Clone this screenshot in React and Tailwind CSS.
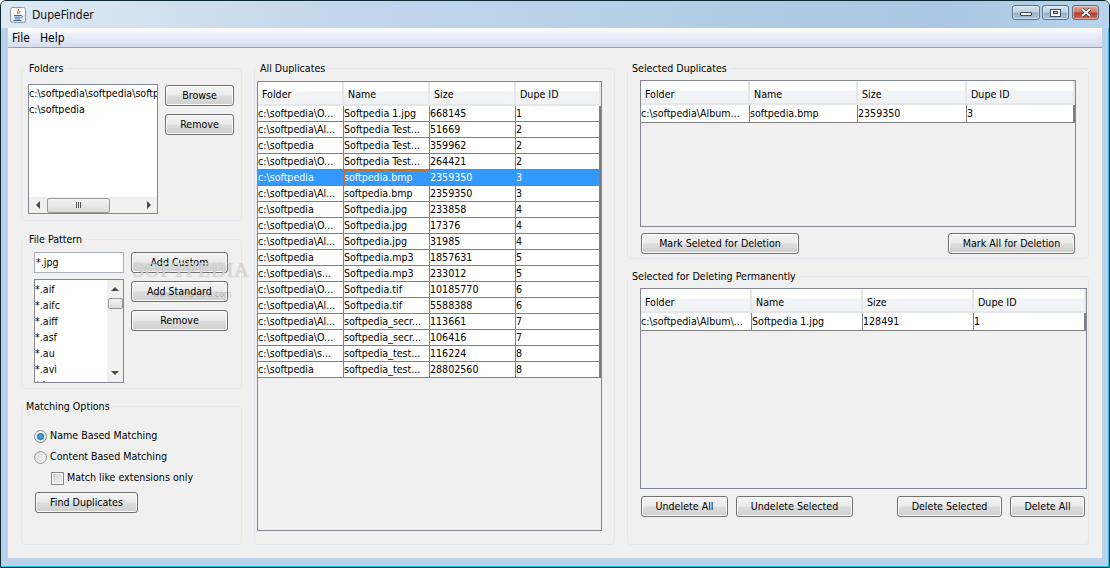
import React from 'react';

const ALL_ROWS = [
  ['c:\\softpedia\\O...', 'Softpedia 1.jpg', '668145', '1'],
  ['c:\\softpedia\\Al...', 'Softpedia Test...', '51669', '2'],
  ['c:\\softpedia', 'Softpedia Test...', '359962', '2'],
  ['c:\\softpedia\\O...', 'Softpedia Test...', '264421', '2'],
  ['c:\\softpedia', 'softpedia.bmp', '2359350', '3'],
  ['c:\\softpedia\\Al...', 'softpedia.bmp', '2359350', '3'],
  ['c:\\softpedia', 'Softpedia.jpg', '233858', '4'],
  ['c:\\softpedia\\O...', 'Softpedia.jpg', '17376', '4'],
  ['c:\\softpedia\\Al...', 'Softpedia.jpg', '31985', '4'],
  ['c:\\softpedia', 'Softpedia.mp3', '1857631', '5'],
  ['c:\\softpedia\\s...', 'Softpedia.mp3', '233012', '5'],
  ['c:\\softpedia\\O...', 'Softpedia.tif', '10185770', '6'],
  ['c:\\softpedia\\Al...', 'Softpedia.tif', '5588388', '6'],
  ['c:\\softpedia\\Al...', 'softpedia_secr...', '113661', '7'],
  ['c:\\softpedia\\O...', 'softpedia_secr...', '106416', '7'],
  ['c:\\softpedia\\s...', 'softpedia_test...', '116224', '8'],
  ['c:\\softpedia', 'softpedia_test...', '28802560', '8'],
];

const HEADERS = ['Folder', 'Name', 'Size', 'Dupe ID'];
const PATTERNS = ['*.aif', '*.aifc', '*.aiff', '*.asf', '*.au', '*.avi', '*.bmp'];

function Panel({ title, className, legendClass = 'left-[3px] px-[4px]', children }) {
  return (
    <div className={`relative rounded-[4px] border border-[#e3e8ee] ${className}`}>
      <span className={`absolute -top-[8px] bg-[#f0f0f0] leading-[14px] ${legendClass}`}>{title}</span>
      {children}
    </div>
  );
}

function Btn({ className = '', children }) {
  return (
    <button className={`flex h-[21px] items-center justify-center rounded-[3px] border border-[#707070] bg-[linear-gradient(#f3f3f3,#ebebeb_48%,#dddddd_52%,#cfcfcf)] pt-[1px] shadow-[inset_0_0_0_1px_#fbfbfb] ${className}`}>
      {children}
    </button>
  );
}

function Arrow({ dir }) {
  const points = { left: '5,0 1,4 5,8', right: '1,0 5,4 1,8', up: '0,5 4,1 8,5', down: '0,1 4,5 8,1' }[dir];
  const size = dir === 'left' || dir === 'right' ? 'h-[8px] w-[6px]' : 'h-[6px] w-[8px]';
  const box = dir === 'left' || dir === 'right' ? '0 0 6 8' : '0 0 8 6';
  return (
    <svg viewBox={box} className={size}>
      <polygon points={points} fill="#4a4a4a" />
    </svg>
  );
}

function DataTable({ columns, rows, className = '', rowHeight = 'h-[16px]', rowLeading = 'leading-[15px]', headerPad = 'pt-[3px]', selectedRow = -1 }) {
  return (
    <div className={`overflow-hidden border border-[#828790] bg-[#f0f0f0] ${className}`}>
      <div className="grid h-[24px]" style={{ gridTemplateColumns: columns }}>
        {HEADERS.map((h) => (
          <div key={h} className={`flex items-center border-r-2 border-b-2 border-[#e4e6e8] bg-[linear-gradient(#ffffff,#ffffff_40%,#f3f4f5_45%,#f1f2f3)] pl-[4px] ${headerPad}`}>
            {h}
          </div>
        ))}
      </div>
      {rows.map((row, i) => (
        <div key={i} className={`grid ${rowHeight}`} style={{ gridTemplateColumns: columns }}>
          {row.map((cell, j) => {
            const selected = i === selectedRow;
            const focused = selected && j === 1;
            return (
              <div
                key={j}
                className={`overflow-hidden whitespace-nowrap ${rowLeading} ${
                  j === 3 ? 'border-r-2' : 'border-r'
                } border-b border-[#808080] ${selected ? 'bg-[#3399ff] text-white' : 'bg-white'} ${
                  focused ? 'outline outline-1 -outline-offset-1 outline-[#c2702a]' : ''
                }`}
              >
                {cell}
              </div>
            );
          })}
        </div>
      ))}
    </div>
  );
}

function JavaIcon() {
  return (
    <svg viewBox="0 0 16 16" className="h-[16px] w-[16px]">
      <rect x="0.5" y="0.5" width="15" height="15" rx="2" fill="#e9eef5" stroke="#8d99a8" />
      <rect x="1.5" y="1.5" width="13" height="6" fill="#ffffff" />
      <path d="M8.5 2c1 1.5-2 2.5-1 4.5M10 4c0 1-1.5 1.500-1 2.500" stroke="#e0641c" strokeWidth="1.200" fill="none" />
      <path d="M4 8.500h7M4.500 10.200h6M5 12h5" stroke="#3f6fa8" strokeWidth="1" />
      <path d="M11 8.500c2 0 2 2-.5 2.500M3.500 13.500h8" stroke="#3f6fa8" strokeWidth="1" fill="none" />
    </svg>
  );
}

function WindowButtons() {
  const base = 'flex h-[15px] items-center justify-center rounded-[3px] border border-[#5d7186] shadow-[inset_0_0_0_1px_rgba(255,255,255,0.45)]';
  const blue = 'bg-[linear-gradient(#d3e2f0,#bcd0e4_48%,#94b0cc_52%,#a9c4dc)]';
  return (
    <div className="mr-[10px] mt-[-4px] flex gap-[2px]">
      <div className={`${base} ${blue} w-[28px] pt-[3px]`}>
        <div className="h-[4px] w-[12px] rounded-[1px] border border-[#3f4d5c] bg-white" />
      </div>
      <div className={`${base} ${blue} mr-[1px] w-[27px]`}>
        <div className="flex h-[8px] w-[11px] items-center justify-center border border-[#3f4d5c] bg-white">
          <div className="h-[3px] w-[5px] border border-[#3f4d5c] bg-[#a9c4dc]" />
        </div>
      </div>
      <div className={`${base} w-[27px] border-[#5a2a2a] bg-[linear-gradient(#e0a397,#cf7a6c_48%,#b8382a_52%,#cf6a5a)]`}>
        <svg viewBox="0 0 12 9" className="h-[9px] w-[12px]">
          <path d="M2 1l8 7M10 1l-8 7" stroke="#3d2a2a" strokeWidth="3.400" />
          <path d="M2 1l8 7M10 1l-8 7" stroke="#ffffff" strokeWidth="2" />
        </svg>
      </div>
    </div>
  );
}

function FoldersPanel() {
  return (
    <Panel title="Folders" className="h-[153px]">
      <div className="flex items-start pl-[6px] pt-[15px]">
        <div className="flex h-[130px] w-[130px] flex-col border border-[#828790] bg-white">
          <div className="flex-1 overflow-hidden pt-[1px]">
            <div className="h-[16px] whitespace-nowrap">c:\softpedia\softpedia\softpedia</div>
            <div className="h-[16px] whitespace-nowrap">c:\softpedia</div>
          </div>
          <div className="flex h-[16px] items-center bg-[#f0f0f0]">
            <div className="flex w-[18px] justify-center"><Arrow dir="left" /></div>
            <div className="flex h-[15px] w-[63px] items-center justify-center gap-[1px] rounded-[2px] border border-[#9a9a9a] bg-[linear-gradient(#f3f3f3,#dcdcdc)]">
              <div className="h-[6px] w-[1px] bg-[#555]" />
              <div className="h-[6px] w-[1px] bg-[#555]" />
              <div className="h-[6px] w-[1px] bg-[#555]" />
            </div>
            <div className="flex flex-1 justify-end pr-[5px]"><Arrow dir="right" /></div>
          </div>
        </div>
        <div className="ml-[7px] mt-[1px] flex flex-col gap-[8px]">
          <Btn className="w-[69px]">Browse</Btn>
          <Btn className="w-[69px]">Remove</Btn>
        </div>
      </div>
    </Panel>
  );
}

function FilePatternPanel() {
  return (
    <Panel title="File Pattern" className="mt-[18px] h-[150px]">
      <div className="flex items-start pl-[12px] pt-[12px]">
        <div className="w-[90px]">
          <div className="flex h-[21px] items-center border border-[#aab0b8] bg-white pl-[1px] pt-[1px]">*.jpg</div>
          <div className="mt-[6px] flex h-[104px] overflow-hidden border border-[#828790] bg-white">
            <div className="flex-1 overflow-hidden pt-[1px]">
              {PATTERNS.map((p) => (
                <div key={p} className="h-[16px] leading-[16px]">{p}</div>
              ))}
            </div>
            <div className="flex w-[16px] flex-col items-center bg-[#f0f0f0]">
              <div className="flex h-[18px] items-center"><Arrow dir="up" /></div>
              <div className="h-[11px] w-[15px] rounded-[2px] border border-[#9a9a9a] bg-[linear-gradient(#f3f3f3,#dcdcdc)]" />
              <div className="flex flex-1 items-end pb-[6px]"><Arrow dir="down" /></div>
            </div>
          </div>
        </div>
        <div className="ml-[7px] flex flex-col gap-[8px]">
          <Btn className="w-[97px]">Add Custom</Btn>
          <Btn className="w-[97px]">Add Standard</Btn>
          <Btn className="w-[97px]">Remove</Btn>
        </div>
      </div>
    </Panel>
  );
}

function MatchingPanel() {
  return (
    <Panel title="Matching Options" className="mt-[17px] flex-1" legendClass="left-[3px] px-[1px]">
      <div className="pl-[12px] pt-[21px]">
        <div className="flex h-[16px] items-center gap-[3px]">
          <div className="flex h-[13px] w-[13px] items-center justify-center rounded-full border border-[#8a8a8a] bg-[#eeeeee]">
            <div className="h-[7px] w-[7px] rounded-full bg-[radial-gradient(#4fb3ea,#0f5c96)]" />
          </div>
          Name Based Matching
        </div>
        <div className="mt-[5px] flex h-[16px] items-center gap-[3px]">
          <div className="h-[13px] w-[13px] rounded-full border border-[#9a9a9a] bg-[linear-gradient(135deg,#d8d8d8,#f8f8f8)]" />
          Content Based Matching
        </div>
        <div className="ml-[17px] mt-[5px] flex h-[16px] items-center gap-[3px]">
          <div className="flex h-[13px] w-[13px] items-center justify-center border border-[#8a8a8a] bg-white">
            <div className="h-[9px] w-[9px] bg-[linear-gradient(135deg,#d0d0d0,#f4f4f4)]" />
          </div>
          Match like extensions only
        </div>
        <Btn className="ml-[1px] mt-[6px] w-[103px]">Find Duplicates</Btn>
      </div>
    </Panel>
  );
}

export default function App() {
  return (
    <div className="relative flex h-[568px] w-[1110px] flex-col overflow-hidden rounded-t-[6px] border-x border-t border-b border-[#0b2a33] bg-[#b9d1ea] font-['DejaVu_Sans'] text-[10.6px] font-stretch-condensed text-black shadow-[inset_-1px_-1px_0_#22c5e0]">
      <div className="flex h-[27px] shrink-0 items-center justify-between bg-[linear-gradient(90deg,#dfe9f3,#c3d7ec_30%,#a9c6e2_85%,#b9d3ec)]">
        <div className="flex items-center gap-[6px] pl-[9px] text-[12px] text-[#111]">
          <JavaIcon />
          DupeFinder
        </div>
        <WindowButtons />
      </div>

      <div className="mx-[7px] flex min-h-0 flex-1 flex-col">
        <div className="flex h-[20px] shrink-0 items-center gap-[10px] border-b border-[#a0a0a0] bg-[linear-gradient(#ffffff,#eef1fa_30%,#d6dcef)] pl-[4px] text-[12px]">
          <span>File</span>
          <span>Help</span>
        </div>
        <div className="flex min-h-0 flex-1 gap-[12px] bg-[#f0f0f0] pb-[13px] pl-[13px] pr-[13px] pt-[20px]">
          <div className="flex w-[221px] flex-col">
            <FoldersPanel />
            <FilePatternPanel />
            <MatchingPanel />
          </div>

          <Panel title="All Duplicates" className="w-[361px] pl-[2px] pt-[12px]" legendClass="left-[1px] px-[4px]">
            <DataTable
              className="h-[450px] w-[345px]"
              columns="86px 86px 86px 85px"
              rows={ALL_ROWS}
              selectedRow={4}
            />
          </Panel>

          <div className="flex w-[462px] flex-col">
            <Panel title="Selected Duplicates" className="h-[191px] pl-[12px] pt-[11px]" legendClass="left-[0px] px-[4px]">
              <DataTable
                className="h-[147px] w-[436px]"
                columns="109px 108px 109px 108px"
                rows={[['c:\\softpedia\\Album...', 'softpedia.bmp', '2359350', '3']]}
                rowHeight="h-[18px]"
                rowLeading="leading-[17px]"
                headerPad="pt-[5px]"
              />
              <div className="mt-[6px] flex justify-between pl-[1px] pr-[13px]">
                <Btn className="w-[158px]">Mark Seleted for Deletion</Btn>
                <Btn className="w-[127px]">Mark All for Deletion</Btn>
              </div>
            </Panel>

            <Panel title="Selected for Deleting Permanently" className="mt-[17px] flex-1 pl-[12px] pt-[11px]" legendClass="left-[0px] px-[4px]">
              <DataTable
                className="h-[201px] w-[447px]"
                columns="111px 111px 111px 112px"
                rows={[['c:\\softpedia\\Album\\...', 'Softpedia 1.jpg', '128491', '1']]}
                rowHeight="h-[18px]"
                rowLeading="leading-[17px]"
                headerPad="pt-[5px]"
              />
              <div className="mt-[7px] flex pl-[1px]">
                <Btn className="w-[87px]">Undelete All</Btn>
                <Btn className="ml-[8px] w-[117px]">Undelete Selected</Btn>
                <Btn className="ml-[44px] w-[105px]">Delete Selected</Btn>
                <Btn className="ml-[8px] w-[75px]">Delete All</Btn>
              </div>
            </Panel>
          </div>
        </div>
      </div>

      <div className="h-[9px] shrink-0" />

      <div className="pointer-events-none absolute left-[132px] top-[258px] font-['Liberation_Serif'] text-[20px] leading-[22px] tracking-[1px] text-[#f7f7f7]/60 [text-shadow:0_0_1px_#a0a0a0]">SOFTPEDIA</div>
      <div className="pointer-events-none absolute left-[152px] top-[287px] text-[9px] leading-[12px] text-black/20">www.softpedia.com</div>
    </div>
  );
}
